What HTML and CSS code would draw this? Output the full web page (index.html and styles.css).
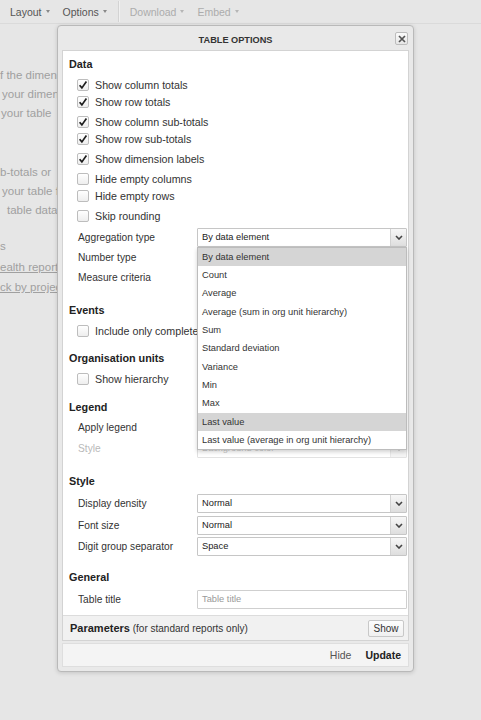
FILE: index.html
```html
<!DOCTYPE html>
<html>
<head>
<meta charset="utf-8">
<link rel="stylesheet" href="styles.css">
</head>
<body>
<div class="toolbar">
  <span class="tb-item">Layout<i class="caret"></i></span>
  <span class="tb-item">Options<i class="caret"></i></span>
  <span class="tb-sep"></span>
  <span class="tb-item disabled">Download<i class="caret"></i></span>
  <span class="tb-item disabled">Embed<i class="caret"></i></span>
</div>

<div class="desc">
  <div class="dl">f the dimensions</div>
  <div class="dl in2">your dimensions</div>
  <div class="dl in1">your table</div>
  <div class="dl gap1">b-totals or</div>
  <div class="dl in2">your table for</div>
  <div class="dl in7">table data</div>
  <div class="dl gap2">s</div>
  <div class="dl link">ealth reports</div>
  <div class="dl link">ck by project</div>
</div>

<div class="window">
  <div class="win-head">
    <span class="win-title">TABLE OPTIONS</span>
    <span class="win-close"><svg width="10" height="10" viewBox="0 0 10 10"><path d="M2 2 L8 8 M8 2 L2 8"/></svg></span>
  </div>
  <div class="panel">
    <div class="content">
      <div class="section sec-data">
        <div class="sec-title">Data</div>
        <div class="group">
          <div class="chk"><span class="box"><svg viewBox="0 0 12 12"><path d="M2.6 6.2 L4.9 8.9 L9.4 2.6"/></svg></span>Show column totals</div>
          <div class="chk"><span class="box"><svg viewBox="0 0 12 12"><path d="M2.6 6.2 L4.9 8.9 L9.4 2.6"/></svg></span>Show row totals</div>
        </div>
        <div class="group">
          <div class="chk"><span class="box"><svg viewBox="0 0 12 12"><path d="M2.6 6.2 L4.9 8.9 L9.4 2.6"/></svg></span>Show column sub-totals</div>
          <div class="chk"><span class="box"><svg viewBox="0 0 12 12"><path d="M2.6 6.2 L4.9 8.9 L9.4 2.6"/></svg></span>Show row sub-totals</div>
        </div>
        <div class="group">
          <div class="chk"><span class="box"><svg viewBox="0 0 12 12"><path d="M2.6 6.2 L4.9 8.9 L9.4 2.6"/></svg></span>Show dimension labels</div>
        </div>
        <div class="group">
          <div class="chk"><span class="box"></span>Hide empty columns</div>
          <div class="chk"><span class="box"></span>Hide empty rows</div>
        </div>
        <div class="group">
          <div class="chk"><span class="box"></span>Skip rounding</div>
        </div>
        <div class="fields">
          <div class="field"><span class="flabel">Aggregation type</span><div class="select"><span class="sel-text">By data element</span><span class="sel-arrow"><svg width="8" height="5" viewBox="0 0 8 5"><path d="M1 1 L4 4 L7 1"/></svg></span></div></div>
          <div class="field"><span class="flabel">Number type</span><div class="select"><span class="sel-text"></span><span class="sel-arrow"><svg width="8" height="5" viewBox="0 0 8 5"><path d="M1 1 L4 4 L7 1"/></svg></span></div></div>
          <div class="field"><span class="flabel">Measure criteria</span><div class="select"><span class="sel-text"></span></div></div>
        </div>
      </div>

      <div class="section sec-events">
        <div class="sec-title">Events</div>
        <div class="chk"><span class="box"></span>Include only completed events</div>
      </div>

      <div class="section sec-org">
        <div class="sec-title">Organisation units</div>
        <div class="chk"><span class="box"></span>Show hierarchy</div>
      </div>

      <div class="section sec-legend">
        <div class="sec-title">Legend</div>
        <div class="field tall"><span class="flabel">Apply legend</span><div class="select"><span class="sel-text"></span><span class="sel-arrow"><svg width="8" height="5" viewBox="0 0 8 5"><path d="M1 1 L4 4 L7 1"/></svg></span></div></div>
        <div class="field tall"><span class="flabel muted">Style</span><div class="select disabled"><span class="sel-text">Background color</span><span class="sel-arrow"><svg width="8" height="5" viewBox="0 0 8 5"><path d="M1 1 L4 4 L7 1"/></svg></span></div></div>
      </div>

      <div class="section sec-style">
        <div class="sec-title">Style</div>
        <div class="field taller"><span class="flabel">Display density</span><div class="select"><span class="sel-text">Normal</span><span class="sel-arrow"><svg width="8" height="5" viewBox="0 0 8 5"><path d="M1 1 L4 4 L7 1"/></svg></span></div></div>
        <div class="field taller"><span class="flabel">Font size</span><div class="select"><span class="sel-text">Normal</span><span class="sel-arrow"><svg width="8" height="5" viewBox="0 0 8 5"><path d="M1 1 L4 4 L7 1"/></svg></span></div></div>
        <div class="field taller"><span class="flabel">Digit group separator</span><div class="select"><span class="sel-text">Space</span><span class="sel-arrow"><svg width="8" height="5" viewBox="0 0 8 5"><path d="M1 1 L4 4 L7 1"/></svg></span></div></div>
      </div>

      <div class="section sec-general">
        <div class="sec-title">General</div>
        <div class="field"><span class="flabel">Table title</span><div class="select input"><span class="sel-text placeholder">Table title</span></div></div>
      </div>
    </div>

    <div class="params">
      <span class="params-label"><b>Parameters</b> (for standard reports only)</span>
      <span class="btn">Show</span>
    </div>

    <ul class="dropdown">
      <li class="sel">By data element</li>
      <li>Count</li>
      <li>Average</li>
      <li>Average (sum in org unit hierarchy)</li>
      <li>Sum</li>
      <li>Standard deviation</li>
      <li>Variance</li>
      <li>Min</li>
      <li>Max</li>
      <li class="sel">Last value</li>
      <li>Last value (average in org unit hierarchy)</li>
    </ul>
  </div>
  <div class="win-foot">
    <span class="foot-hide">Hide</span>
    <span class="foot-update">Update</span>
  </div>
</div>
</body>
</html>
```
FILE: styles.css
```css
html, body {
  margin: 0;
  padding: 0;
}
body {
  width: 481px;
  height: 720px;
  overflow: hidden;
  position: relative;
  background: #e6e6e6;
  font-family: "Liberation Sans", Arial, sans-serif;
  color: #333;
}

/* toolbar */
.toolbar {
  height: 23px;
  border-bottom: 1px solid #dadada;
  display: flex;
  align-items: center;
  padding-left: 10px;
  gap: 13px;
  font-size: 10.5px;
  color: #555;
}
.tb-item {
  display: flex;
  align-items: center;
}
.tb-item.disabled {
  color: #acacac;
}
.caret {
  display: inline-block;
  width: 0;
  height: 0;
  margin-left: 4px;
  border-left: 2.5px solid transparent;
  border-right: 2.5px solid transparent;
  border-top: 3px solid #888;
}
.tb-item.disabled .caret {
  border-top-color: #b5b5b5;
}
.tb-sep {
  width: 1px;
  height: 21px;
  background: #d3d3d3;
  box-shadow: 1px 0 0 #f0f0f0;
  margin: 0 -2px 0 -2px;
}

/* background description */
.desc {
  padding-top: 42px;
  font-size: 11.5px;
  color: #a0a0a0;
}
.dl {
  line-height: 19px;
  white-space: nowrap;
}
.dl.in1 { padding-left: 1px; }
.dl.in2 { padding-left: 2px; }
.dl.in7 { padding-left: 7px; }
.dl.gap1 { margin-top: 40px; }
.dl.gap2 { margin-top: 17px; }
.dl.link {
  text-decoration: underline;
  line-height: 20px;
}
.dl.gap2 + .dl.link { margin-top: 1px; }

/* window */
.window {
  position: absolute;
  left: 57px;
  top: 25px;
  width: 357px;
  height: 647px;
  box-sizing: border-box;
  border: 1px solid #b9b9b9;
  border-radius: 4px;
  background: #e9e9e9;
  box-shadow: 0 1px 4px rgba(0, 0, 0, 0.15);
  padding: 0 4px 4px 4px;
  display: flex;
  flex-direction: column;
}
.win-head {
  height: 24px;
  position: relative;
  text-align: center;
  line-height: 24px;
  flex: none;
}
.win-title {
  font-weight: bold;
  font-size: 9.2px;
  color: #333;
}
.win-close {
  position: absolute;
  right: 1px;
  top: 6px;
  width: 13px;
  height: 13px;
  box-sizing: border-box;
  border: 1px solid #bdbdbd;
  border-radius: 2px;
  background: linear-gradient(#fbfbfb, #e6e6e6);
  display: flex;
  align-items: center;
  justify-content: center;
}
.win-close svg path {
  stroke: #555;
  stroke-width: 1.7;
  fill: none;
}

.panel {
  flex: 1;
  background: #fff;
  border: 1px solid #d3d3d3;
  display: flex;
  flex-direction: column;
  position: relative;
}
.content {
  flex: 1;
}

.sec-title {
  font-weight: bold;
  font-size: 10.8px;
  color: #222;
  line-height: 16px;
  padding-left: 6px;
  margin-bottom: 4px;
}
.sec-data { padding-top: 5px; }
.sec-events { margin-top: 15px; }
.sec-org { margin-top: 11px; }
.sec-legend { margin-top: 12px; }
.sec-legend .sec-title { margin-bottom: 2px; }
.sec-style { margin-top: 14px; }
.sec-general { margin-top: 11.5px; }

.group + .group { margin-top: 3px; }

.chk {
  height: 17px;
  display: flex;
  align-items: center;
  padding-left: 14px;
  font-size: 10.7px;
  color: #333;
  white-space: nowrap;
}
.box {
  width: 12px;
  height: 12px;
  box-sizing: border-box;
  border: 1px solid #bdbdbd;
  border-radius: 2px;
  background: linear-gradient(#ffffff, #eeeeee);
  margin-right: 6px;
  position: relative;
  flex: none;
}
.box svg {
  position: absolute;
  left: -1px;
  top: -1px;
  width: 12px;
  height: 12px;
}
.box svg path {
  fill: none;
  stroke: #1e1e1e;
  stroke-width: 1.7;
}

.fields { margin-top: 3px; }
.field {
  height: 20px;
  display: flex;
  align-items: center;
  padding-left: 15px;
}
.field.tall { height: 21px; }
.field.taller { height: 21.5px; }
.flabel {
  width: 119px;
  flex: none;
  font-size: 10.2px;
  color: #333;
  white-space: nowrap;
}
.flabel.muted { color: #b9b9b9; }

.select {
  width: 210px;
  height: 19px;
  box-sizing: border-box;
  border: 1px solid #c6c6c6;
  border-radius: 1px;
  background: #fff;
  display: flex;
  flex: none;
}
.sel-text {
  flex: 1;
  padding-left: 4px;
  font-size: 9.3px;
  line-height: 17px;
  color: #222;
  white-space: nowrap;
  overflow: hidden;
}
.sel-text.placeholder { color: #9a9a9a; }
.sel-arrow {
  width: 15px;
  border-left: 1px solid #d2d2d2;
  background: linear-gradient(#f7f7f7, #dedede);
  display: flex;
  align-items: center;
  justify-content: center;
}
.sel-arrow svg path {
  fill: none;
  stroke: #444;
  stroke-width: 1.6;
}
.select.disabled {
  border-color: #e2e2e2;
}
.select.disabled .sel-text { color: #c9c9c9; }
.select.disabled .sel-arrow {
  background: #f4f4f4;
  border-left-color: #e8e8e8;
}
.select.disabled .sel-arrow svg path { stroke: #c8c8c8; }
.select.input { border-color: #cfcfcf; }

/* parameters bar */
.params {
  height: 25px;
  box-sizing: border-box;
  flex: none;
  background: #f1f1f1;
  border-top: 1px solid #dcdcdc;
  display: flex;
  align-items: center;
  justify-content: space-between;
  padding: 0 4px 0 7px;
}
.params-label {
  font-size: 10px;
  color: #333;
}
.params-label b {
  font-size: 11px;
  color: #222;
}
.btn {
  width: 36px;
  height: 17px;
  box-sizing: border-box;
  border: 1px solid #c8c8c8;
  border-radius: 2px;
  background: linear-gradient(#fdfdfd, #f0f0f0);
  font-size: 10px;
  color: #333;
  text-align: center;
  line-height: 15px;
}

/* dropdown list */
.dropdown {
  position: absolute;
  left: 134px;
  top: 195.5px;
  width: 210px;
  box-sizing: border-box;
  margin: 0;
  padding: 0;
  list-style: none;
  background: #fff;
  border: 1px solid #bcbcbc;
  box-shadow: 0 2px 4px rgba(0, 0, 0, 0.18);
}
.dropdown li {
  height: 18.35px;
  line-height: 18.35px;
  padding-left: 4px;
  font-size: 9.3px;
  color: #333;
  white-space: nowrap;
}
.dropdown li.sel {
  background: #d5d5d5;
}

/* footer */
.win-foot {
  height: 24px;
  box-sizing: border-box;
  flex: none;
  margin-top: 2px;
  background: #f4f4f4;
  border: 1px solid #dedede;
  display: flex;
  align-items: center;
  justify-content: flex-end;
  padding-right: 7px;
  gap: 14px;
  font-size: 10.5px;
}
.foot-hide { color: #555; }
.foot-update {
  font-weight: bold;
  color: #222;
}
```
